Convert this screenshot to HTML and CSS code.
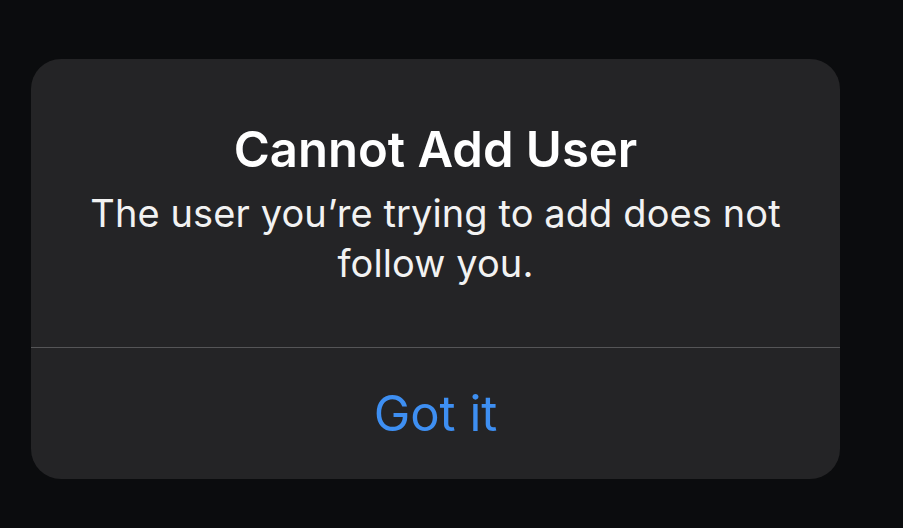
FILE: index.html
```html
<!DOCTYPE html>
<html>
<head>
<meta charset="utf-8">
<link rel="stylesheet" href="styles.css">
</head>
<body>
<div class="screen">
  <div class="alert">
    <div class="alert-body">
      <div class="alert-title">Cannot Add User</div>
      <div class="alert-message">The user you’re trying to add does not follow you.</div>
    </div>
    <div class="alert-action">Got it</div>
  </div>
</div>
</body>
</html>
```
FILE: styles.css
```css
html, body {
  margin: 0;
  padding: 0;
  background: #0b0c0e;
}
.screen {
  width: 903px;
  height: 528px;
  padding: 59px 0 0 31px;
  box-sizing: border-box;
  font-family: Inter, "Noto Sans", sans-serif;
}
.alert {
  width: 809px;
  height: 420px;
  background: #242426;
  border-radius: 30px;
  display: flex;
  flex-direction: column;
  overflow: hidden;
}
.alert-body {
  height: 289px;
  box-sizing: border-box;
  border-bottom: 1px solid #555557;
  display: flex;
  flex-direction: column;
  align-items: center;
  padding: 63px 40px 0;
  text-align: center;
}
.alert-title {
  color: #ffffff;
  font-size: 49px;
  font-weight: 600;
  line-height: 56px;
}
.alert-message {
  color: #f2f2f2;
  font-size: 38px;
  font-weight: 400;
  line-height: 50px;
  margin-top: 10px;
  letter-spacing: 0.1px;
}
.alert-action {
  flex: 1;
  display: flex;
  align-items: center;
  justify-content: center;
  color: #3e8ff2;
  font-size: 49px;
  font-weight: 400;
}
```
